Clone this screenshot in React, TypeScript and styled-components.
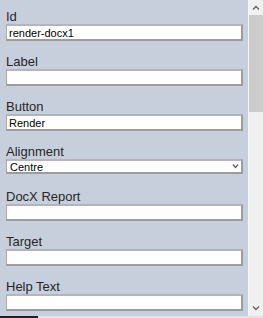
import React from "react";
import styled, { createGlobalStyle } from "styled-components";

const Global = createGlobalStyle`
	html, body {
		margin: 0;
		padding: 0;
		overflow: hidden;
	}
	body {
		font-family: "Liberation Sans", Arial, sans-serif;
	}
`;

const Frame = styled.div`
	width: 263px;
	height: 318px;
	display: flex;
	flex-direction: column;
	background: #c8cfdc;
`;

const Main = styled.div`
	flex: 1;
	display: flex;
	min-height: 0;
`;

const Panel = styled.div`
	flex: 1;
	overflow: hidden;
	padding: 8px 6px 0 6px;
	display: flex;
	flex-direction: column;
`;

const Field = styled.div`
	height: 45px;
	flex: none;
	display: flex;
	flex-direction: column;
`;

const Label = styled.label`
	display: block;
	box-sizing: border-box;
	height: 16px;
	padding-top: 1px;
	font-size: 13px;
	line-height: 15px;
	color: #262626;
`;

const TextInput = styled.input`
	box-sizing: border-box;
	width: 237px;
	height: 17px;
	margin: 0;
	padding: 0 2px;
	font-family: "Liberation Sans", Arial, sans-serif;
	font-size: 11px;
	color: #000;
	background: #fff;
	border-style: solid;
	border-width: 2px 2px 2px 1px;
	border-color: #b4b4be #9c9c9c #9c9c9c #a8a8a8;
	outline: none;
`;

const SelectBox = styled.div`
	box-sizing: border-box;
	width: 237px;
	height: 15px;
	display: flex;
	align-items: center;
	justify-content: space-between;
	padding: 0 2px 0 3px;
	font-size: 11px;
	background: #fff;
	border-style: solid;
	border-width: 2px 2px 2px 1px;
	border-color: #b4b4be #9c9c9c #9c9c9c #a8a8a8;
`;

const Scrollbar = styled.div`
	width: 14px;
	display: flex;
	flex-direction: column;
	background: #f0f0f0;
	border-left: 1px solid #f7f7f7;
`;

const ArrowButton = styled.div`
	height: 15px;
	display: flex;
	align-items: center;
	justify-content: center;
`;

const Track = styled.div`
	flex: 1;
	display: flex;
	flex-direction: column;
`;

const Thumb = styled.div<{ size: number }>`
	height: ${(p) => p.size}px;
	background: #cdcdcd;
`;

const Footer = styled.div`
	height: 2px;
	display: flex;
	background: #e4e4e4;
`;

const FooterMark = styled.div`
	width: 38px;
	background: #202020;
`;

function Chevron({ up, small }: { up?: boolean; small?: boolean }) {
	const w = small ? 7 : 8;
	return (
		<svg width={w} height="5" viewBox={`0 0 ${w} 5`}>
			<path
				d={up ? `M1 4.5 L${w / 2} 1.5 L${w - 1} 4.5` : `M1 0.5 L${w / 2} 3.5 L${w - 1} 0.5`}
				fill="none"
				stroke="#606060"
				strokeWidth="1.3"
			/>
		</svg>
	);
}

const fields = [
	{ label: "Id", value: "render-docx1" },
	{ label: "Label", value: "" },
	{ label: "Button", value: "Render" },
	{ label: "Alignment", value: "Centre", select: true },
	{ label: "DocX Report", value: "" },
	{ label: "Target", value: "" },
	{ label: "Help Text", value: "" }
];

export default function App() {
	return (
		<Frame>
			<Global />
			<Main>
				<Panel>
					{fields.map((f) => (
						<Field key={f.label}>
							<Label>{f.label}</Label>
							{f.select ? (
								<SelectBox>
									<span>{f.value}</span>
									<Chevron small />
								</SelectBox>
							) : (
								<TextInput defaultValue={f.value} readOnly />
							)}
						</Field>
					))}
				</Panel>
				<Scrollbar>
					<ArrowButton>
						<Chevron up />
					</ArrowButton>
					<Track>
						<Thumb size={97} />
					</Track>
					<ArrowButton>
						<Chevron />
					</ArrowButton>
				</Scrollbar>
			</Main>
			<Footer>
				<FooterMark />
			</Footer>
		</Frame>
	);
}
